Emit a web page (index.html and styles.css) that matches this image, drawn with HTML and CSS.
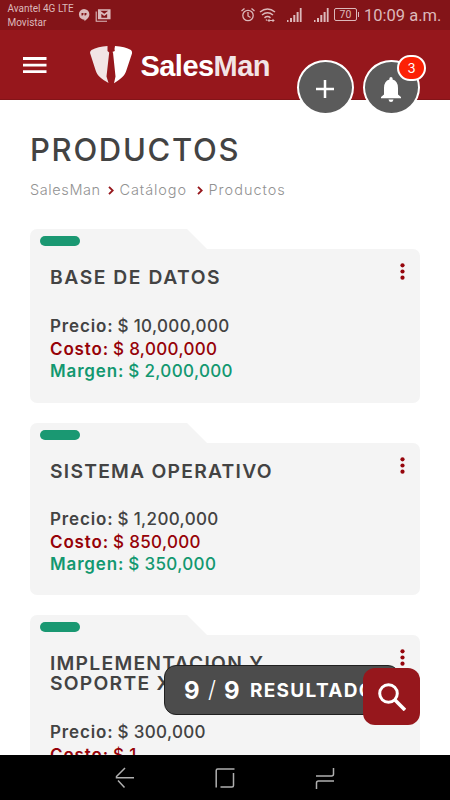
FILE: index.html
```html
<!DOCTYPE html>
<html lang="es">
<head>
    <meta charset="UTF-8">
    <meta name="viewport" content="width=device-width, initial-scale=1.0">
    <title>SalesMan - Productos</title>
    <link rel="stylesheet" href="styles.css">
</head>
<body>
    <div class="status-bar">
        <div class="carrier">Avantel 4G LTE<br>Movistar</div>
        <svg class="notifications" width="34" height="16" viewBox="0 0 34 16">
            <path fill="#dcb9bb" fill-rule="evenodd" d="M6 1a5.400 5.400 0 0 1 5.400 5.400c0 2.700-2 4.300-4.900 6.900v-1.600A5.350 5.350 0 0 1 6 1zM3.500 5v2.600h1L5.500 6.500V5zm3 0v2.600h1L8.500 6.500V5z"/>
            <path fill="none" stroke="#dcb9bb" stroke-width="1.100" d="M18.200 3.500v9.700H29"/>
            <path fill="none" stroke="#dcb9bb" stroke-width="1.700" d="M20.800 10.500V2h10.900v8.500zM22.500 10.500V4l3.750 3L30 4v6.500"/>
        </svg>
        <svg class="alarm" width="16" height="16" viewBox="0 0 16 16" fill="none" stroke="#dcb9bb" stroke-width="1.300">
            <circle cx="8" cy="8.500" r="5.200"/>
            <path d="M8 5v4l2.500 1.500M1.500 4l3-2.500M14.500 4l-3-2.500"/>
        </svg>
        <svg class="wifi" width="17" height="16" viewBox="0 0 17 16" fill="none" stroke="#dcb9bb" stroke-width="1.500">
            <path d="M1 5q7.500-6 15 0M3 8q5.500-4.500 11 0M5.500 10.800q3-2.500 6 0"/>
            <path stroke-width="1" d="M9 13.500h6M10.500 12L9 13.500l1.500 1.500M13.500 12l1.500 1.500-1.500 1.500"/>
            <circle cx="7.500" cy="13" r=".8" fill="#dcb9bb" stroke="none"/>
        </svg>
        <svg class="signal" width="15" height="15" viewBox="0 0 15 15" fill="#dcb9bb">
            <path d="M0 12h1.500v2H0zM3 10h2v4H3zM6.300 7h2v7h-2zM9.600 4h2v10h-2zM12.800 0h1.800v14h-1.800z"/>
        </svg>
        <svg class="signal second" width="15" height="15" viewBox="0 0 15 15" fill="#dcb9bb">
            <path d="M0 12h1.500v2H0zM3 10h2v4H3zM6.300 7h2v7h-2zM9.600 4h2v10h-2zM12.800 0h1.800v14h-1.800z"/>
        </svg>
        <div class="battery">70</div>
        <div class="clock">10:09 a.m.</div>
    </div>

    <header class="header">
        <svg class="menu" width="24" height="17" viewBox="0 0 24 17" fill="#fff">
            <path d="M0 0h23.500v3H0zM0 6.700h23.500v2.800H0zM0 13.300h23.500v2.700H0z"/>
        </svg>
        <svg class="logo" width="43" height="38" viewBox="0 0 43 38">
            <path fill="#f2e4e5" d="M17.500 0v5l1.700 1.500-2.700 24 2 6.500C12 33 7 30 5.500 24L.2 7.500q-.6-2 1.300-3.500Q8 .5 17.500 0z"/>
            <path fill="#fff" d="M25 0Q35 .5 41 4q1.500 1.500 1 3.500L36.500 24c-1.500 6-6 9-12.500 13.300l1.500-6.800-2.500-24L22.300 6l2.500-1-.3-2z"/>
        </svg>
        <div class="brand">Sales<span>Man</span></div>
        <button class="round-btn">
            <svg width="18" height="18" viewBox="0 0 18 18" fill="none" stroke="#fff" stroke-width="2.500">
                <path d="M9 0v18M0 9h18"/>
            </svg>
        </button>
        <button class="round-btn bell">
            <svg width="20" height="25" viewBox="0 0 20 25" fill="#fff">
                <path d="M10 0q1.600 0 1.600 1.500v1Q17 4 17 11v6.500l3 2.500v1.200H0V20l3-2.500V11q0-7 5.400-8.500v-1Q8.400 0 10 0zM7.500 22.500h5q-.5 2.500-2.500 2.500t-2.500-2.500z"/>
            </svg>
            <span class="badge">3</span>
        </button>
    </header>

    <main class="content">
        <h1>PRODUCTOS</h1>
        <nav class="breadcrumb">
            <span class="crumb-home">SalesMan</span>
            <svg width="6" height="9" viewBox="0 0 6 9"><path d="M1 .8l3.700 3.700L1 8.200"/></svg>
            <span class="crumb-catalog">Catálogo</span>
            <svg width="6" height="9" viewBox="0 0 6 9"><path d="M1 .8l3.700 3.700L1 8.200"/></svg>
            <span class="crumb-current">Productos</span>
        </nav>

        <section class="card">
            <div class="tab"><div class="status"></div></div>
            <div class="card-body">
                <div class="card-head">
                    <h2 class="wide">BASE DE DATOS</h2>
                    <svg class="dots" width="5" height="17" viewBox="0 0 5 17"><circle cx="2.500" cy="2.300" r="2.100"/><circle cx="2.500" cy="8.500" r="2.100"/><circle cx="2.500" cy="14.700" r="2.100"/></svg>
                </div>
                <p class="price"><b>Precio:</b><span>$ 10,000,000</span></p>
                <p class="cost"><b>Costo:</b><span>$ 8,000,000</span></p>
                <p class="margin"><b>Margen:</b><span>$ 2,000,000</span></p>
            </div>
        </section>

        <section class="card compact">
            <div class="tab"><div class="status"></div></div>
            <div class="card-body">
                <div class="card-head">
                    <h2>SISTEMA OPERATIVO</h2>
                    <svg class="dots" width="5" height="17" viewBox="0 0 5 17"><circle cx="2.500" cy="2.300" r="2.100"/><circle cx="2.500" cy="8.500" r="2.100"/><circle cx="2.500" cy="14.700" r="2.100"/></svg>
                </div>
                <p class="price"><b>Precio:</b><span>$ 1,200,000</span></p>
                <p class="cost"><b>Costo:</b><span>$ 850,000</span></p>
                <p class="margin"><b>Margen:</b><span>$ 350,000</span></p>
            </div>
        </section>

        <section class="card">
            <div class="tab"><div class="status"></div></div>
            <div class="card-body">
                <div class="card-head">
                    <h2>IMPLEMENTACION Y<br>SOPORTE X</h2>
                    <svg class="dots" width="5" height="17" viewBox="0 0 5 17"><circle cx="2.500" cy="2.300" r="2.100"/><circle cx="2.500" cy="8.500" r="2.100"/><circle cx="2.500" cy="14.700" r="2.100"/></svg>
                </div>
                <p class="price"><b>Precio:</b><span>$ 300,000</span></p>
                <p class="cost"><b>Costo:</b><span>$ 1</span></p>
            </div>
        </section>
    </main>

    <div class="results">
        <span class="count">9</span><span class="slash">/</span><span class="count">9</span>
        <span class="label">RESULTADOS</span>
    </div>
    <button class="search">
        <svg width="28" height="28" viewBox="0 0 28 28" fill="none" stroke="#fff">
            <circle cx="10.500" cy="10.500" r="8.800" stroke-width="3"/>
            <path stroke-width="3.600" d="M17 17l10 10"/>
        </svg>
    </button>

    <footer class="nav-bar">
        <svg width="20" height="22" viewBox="0 0 20 22"><path d="M10 1L1.500 9.500v1.300H19M3 13.500l6.500 7"/></svg>
        <svg width="20" height="20" viewBox="0 0 20 20"><path d="M1.200 19.500V2.500q0-1.500 1.500-1.500H19.500M18.500 5v12.500q0 1.500-1.500 1.500H5.500"/></svg>
        <svg width="20" height="22" viewBox="0 0 20 22"><path d="M1 9h15.500q2 0 2-2V1M19 14H3.500q-2 0-2 2v6"/></svg>
    </footer>
</body>
</html>
```

FILE: styles.css
```css
* {
    box-sizing: border-box;
}
body {
    margin: 0;
    height: 800px;
    display: flex;
    flex-direction: column;
    position: relative;
    overflow: hidden;
    background-color: #fff;
    color: #434343;
    font-family: Inter, "Open Sans", sans-serif;
}
svg {
    display: block;
    flex: none;
}
button {
    border: none;
    padding: 0;
    font-family: inherit;
}
.status-bar {
    flex: none;
    height: 30px;
    display: flex;
    align-items: flex-start;
    background-color: #831418;
    color: #dcb9bb;
    font-family: Roboto, sans-serif;
    padding-left: 7.500px;
}
.carrier {
    width: 70px;
    padding-top: 2px;
    font-size: 10px;
    line-height: 13.800px;
    white-space: nowrap;
}
.notifications {
    margin-top: 8px;
}
.alarm {
    margin: 7px 0 0 128.500px;
}
.wifi {
    margin: 7px 0 0 3px;
}
.signal {
    margin: 8px 0 0 11px;
}
.second {
    margin-left: 11.500px;
}
.battery {
    position: relative;
    width: 23px;
    height: 13px;
    margin: 8px 0 0 5.500px;
    border: 1px solid #dcb9bb;
    border-radius: 2px;
    font-size: 10.500px;
    line-height: 11px;
    text-align: center;
}
.battery::after {
    content: "";
    position: absolute;
    right: -3px;
    top: 3px;
    width: 1px;
    height: 5px;
    background-color: #dcb9bb;
}
.clock {
    margin-left: 7px;
    font-size: 16.500px;
    line-height: 31px;
    white-space: nowrap;
}
.header {
    flex: none;
    height: 70px;
    display: flex;
    align-items: flex-start;
    background-color: #96171c;
    border-bottom: 1px solid #831418;
    padding-left: 23px;
}
.menu {
    margin-top: 27px;
}
.logo {
    margin: 16px 0 0 43px;
}
.brand {
    width: 130px;
    margin: 19px 0 0 7.500px;
    color: #fff;
    font-family: "Liberation Sans", Arial, sans-serif;
    font-weight: bold;
    font-size: 29px;
    line-height: 34px;
    letter-spacing: -0.550px;
}
.brand span {
    color: #f2e4e5;
}
.round-btn {
    position: relative;
    flex: none;
    display: flex;
    align-items: center;
    justify-content: center;
    width: 56.500px;
    height: 55px;
    margin: 30px 0 0 26.500px;
    border: 2px solid #fff;
    border-radius: 50%;
    background-color: #5b5b5b;
}
.round-btn > svg {
    margin-top: 3px;
}
.bell {
    margin-left: 9.500px;
}
.badge {
    position: absolute;
    top: -7px;
    left: 32px;
    width: 29px;
    height: 26px;
    border: 2px solid #fff;
    border-radius: 13px;
    background-color: #fc2105;
    color: #fff;
    font-size: 13px;
    line-height: 23px;
    text-align: center;
}
.content {
    flex: 1;
    min-height: 0;
    overflow: hidden;
    padding: 30px 30px 0;
}
h1 {
    margin: 0;
    font-size: 31px;
    font-weight: 500;
    line-height: 40px;
    letter-spacing: 1.700px;
}
.breadcrumb {
    display: flex;
    align-items: center;
    height: 20px;
    margin: 9px 0 30px;
    color: #929292;
    font-size: 14.500px;
    font-weight: 300;
}
.breadcrumb svg {
    fill: none;
    stroke: #96171c;
    stroke-width: 1.800px;
    margin-top: 2px;
}
.crumb-home {
    width: 78px;
    letter-spacing: 0.600px;
}
.crumb-catalog {
    width: 83px;
    padding-left: 5.500px;
    letter-spacing: 0.900px;
}
.crumb-current {
    padding-left: 5.500px;
    letter-spacing: 1px;
}
.card {
    margin-bottom: 20px;
}
.tab {
    width: 177px;
    height: 20px;
    padding: 7px 10px;
    background-color: #f4f4f4;
    border-top-left-radius: 7px;
    clip-path: polygon(0 0, 157px 0, 177px 100%, 0 100%);
}
.status {
    width: 40px;
    height: 10px;
    border-radius: 5px;
    background-color: #1a9872;
}
.card-body {
    height: 154px;
    padding: 14px 15px 0 20px;
    background-color: #f4f4f4;
    border-radius: 0 7px 7px 7px;
}
.card-head {
    display: flex;
    justify-content: space-between;
    margin-bottom: 28px;
}
.compact .card-body {
    height: 152px;
}
.compact .card-head {
    margin-bottom: 27px;
}
.dots {
    fill: #96050c;
}
h2 {
    margin: 4px 0 0;
    font-size: 19.300px;
    font-weight: 600;
    line-height: 20px;
    letter-spacing: 1.250px;
    white-space: nowrap;
}
.wide {
    letter-spacing: 1.550px;
}
.card p {
    display: flex;
    gap: 4px;
    margin: 0;
    font-size: 17px;
    font-weight: 500;
    line-height: 22.500px;
    letter-spacing: 0.350px;
    white-space: nowrap;
}
.card b {
    font-weight: 600;
    letter-spacing: 0.850px;
}
.card .cost {
    color: #960208;
}
.card .margin {
    color: #129870;
}
.results {
    position: absolute;
    left: 164px;
    top: 665px;
    width: 236px;
    height: 50px;
    display: flex;
    align-items: center;
    padding-left: 19px;
    overflow: hidden;
    border: 1px solid #202020;
    border-radius: 12px;
    background-color: #4c4c4c;
    color: #fff;
}
.count {
    width: 16px;
    font-size: 24px;
    font-weight: 700;
}
.slash {
    width: 24px;
    font-size: 23px;
    font-weight: 300;
    text-align: center;
}
.label {
    margin-left: 10px;
    font-size: 19px;
    font-weight: 700;
    letter-spacing: 1.300px;
}
.search {
    position: absolute;
    left: 363px;
    top: 668px;
    width: 57px;
    height: 57px;
    display: flex;
    align-items: center;
    justify-content: center;
    border-radius: 12px;
    background-color: #96171c;
}
.nav-bar {
    flex: none;
    height: 45px;
    display: flex;
    align-items: center;
    justify-content: center;
    gap: 80px;
    background-color: #000;
}
.nav-bar svg {
    fill: none;
    stroke: #b0b0b0;
    stroke-width: 1.500px;
}
```
